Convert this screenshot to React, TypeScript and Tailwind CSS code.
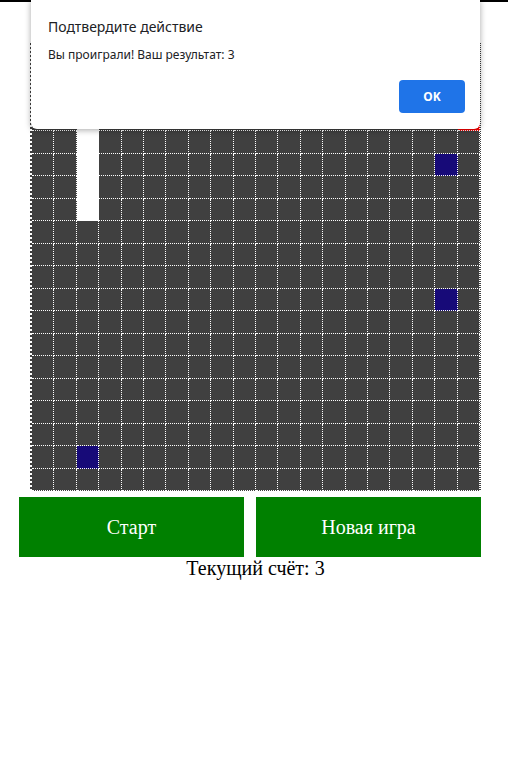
import React from 'react';

const SIZE = 20;

// snake body, head and food positions as seen on the board
const snake = new Set(['3-2', '4-2', '5-2', '6-2', '7-2']);
const head = '3-19';
const food = new Set(['5-18', '11-18', '18-2']);

const cellClass = (key: string) => {
  if (key === head) return 'bg-[#ff0000]';
  if (snake.has(key)) return 'bg-white';
  if (food.has(key)) return 'bg-[#170a78]';
  return 'bg-[#404040]';
};

const Board: React.FC = () => {
  const cells = [];
  for (let r = 0; r < SIZE; r++) {
    for (let c = 0; c < SIZE; c++) {
      const key = `${r}-${c}`;
      cells.push(
        <div
          key={key}
          className={`h-[22.5px] border-r border-b border-dotted border-white ${cellClass(key)}`}
        />
      );
    }
  }
  return (
    <div className="ml-[11px] w-[451px] grid grid-cols-20 border-l-2 border-r border-dotted border-white bg-[#404040]">
      {cells}
    </div>
  );
};

const ConfirmDialog: React.FC = () => (
  <div
    className="absolute left-[31px] top-0 w-[449px] h-[129px] bg-white rounded-b-[6px] shadow-[0_1px_6px_rgba(0,0,0,0.35)]"
    style={{ fontFamily: '"Noto Sans", "Open Sans", sans-serif' }}
  >
    <div className="absolute left-[17px] top-[17px] text-[14px] leading-5 text-[#202124]">
      Подтвердите действие
    </div>
    <div className="absolute left-[17px] top-[47px] text-[12px] leading-4 text-[#202124]">
      Вы проиграли! Ваш результат: 3
    </div>
    <button className="absolute left-[368px] top-[80px] w-[66px] h-[33px] rounded-[4px] bg-[#1f74e8] text-white text-[12px] font-bold">
      OK
    </button>
  </div>
);

const App: React.FC = () => {
  return (
    <div className="relative w-[508px] h-[764px] bg-white" style={{ fontFamily: '"Liberation Serif", serif' }}>
      <div className="h-[2px] bg-black" />
      <div className="pt-[39px] ml-[19px] w-[462px] flex flex-col">
        <Board />
        <div className="mt-[6px] flex gap-[12px]">
          <button className="w-[225px] h-[60px] bg-[#008000] text-white text-[20px]">Старт</button>
          <button className="w-[225px] h-[60px] bg-[#008000] text-white text-[20px]">Новая игра</button>
        </div>
        <div className="ml-[11px] w-[451px] text-center text-[20px] leading-[23px] text-black">
          Текущий счёт: 3
        </div>
      </div>
      <ConfirmDialog />
    </div>
  );
};

export default App;
